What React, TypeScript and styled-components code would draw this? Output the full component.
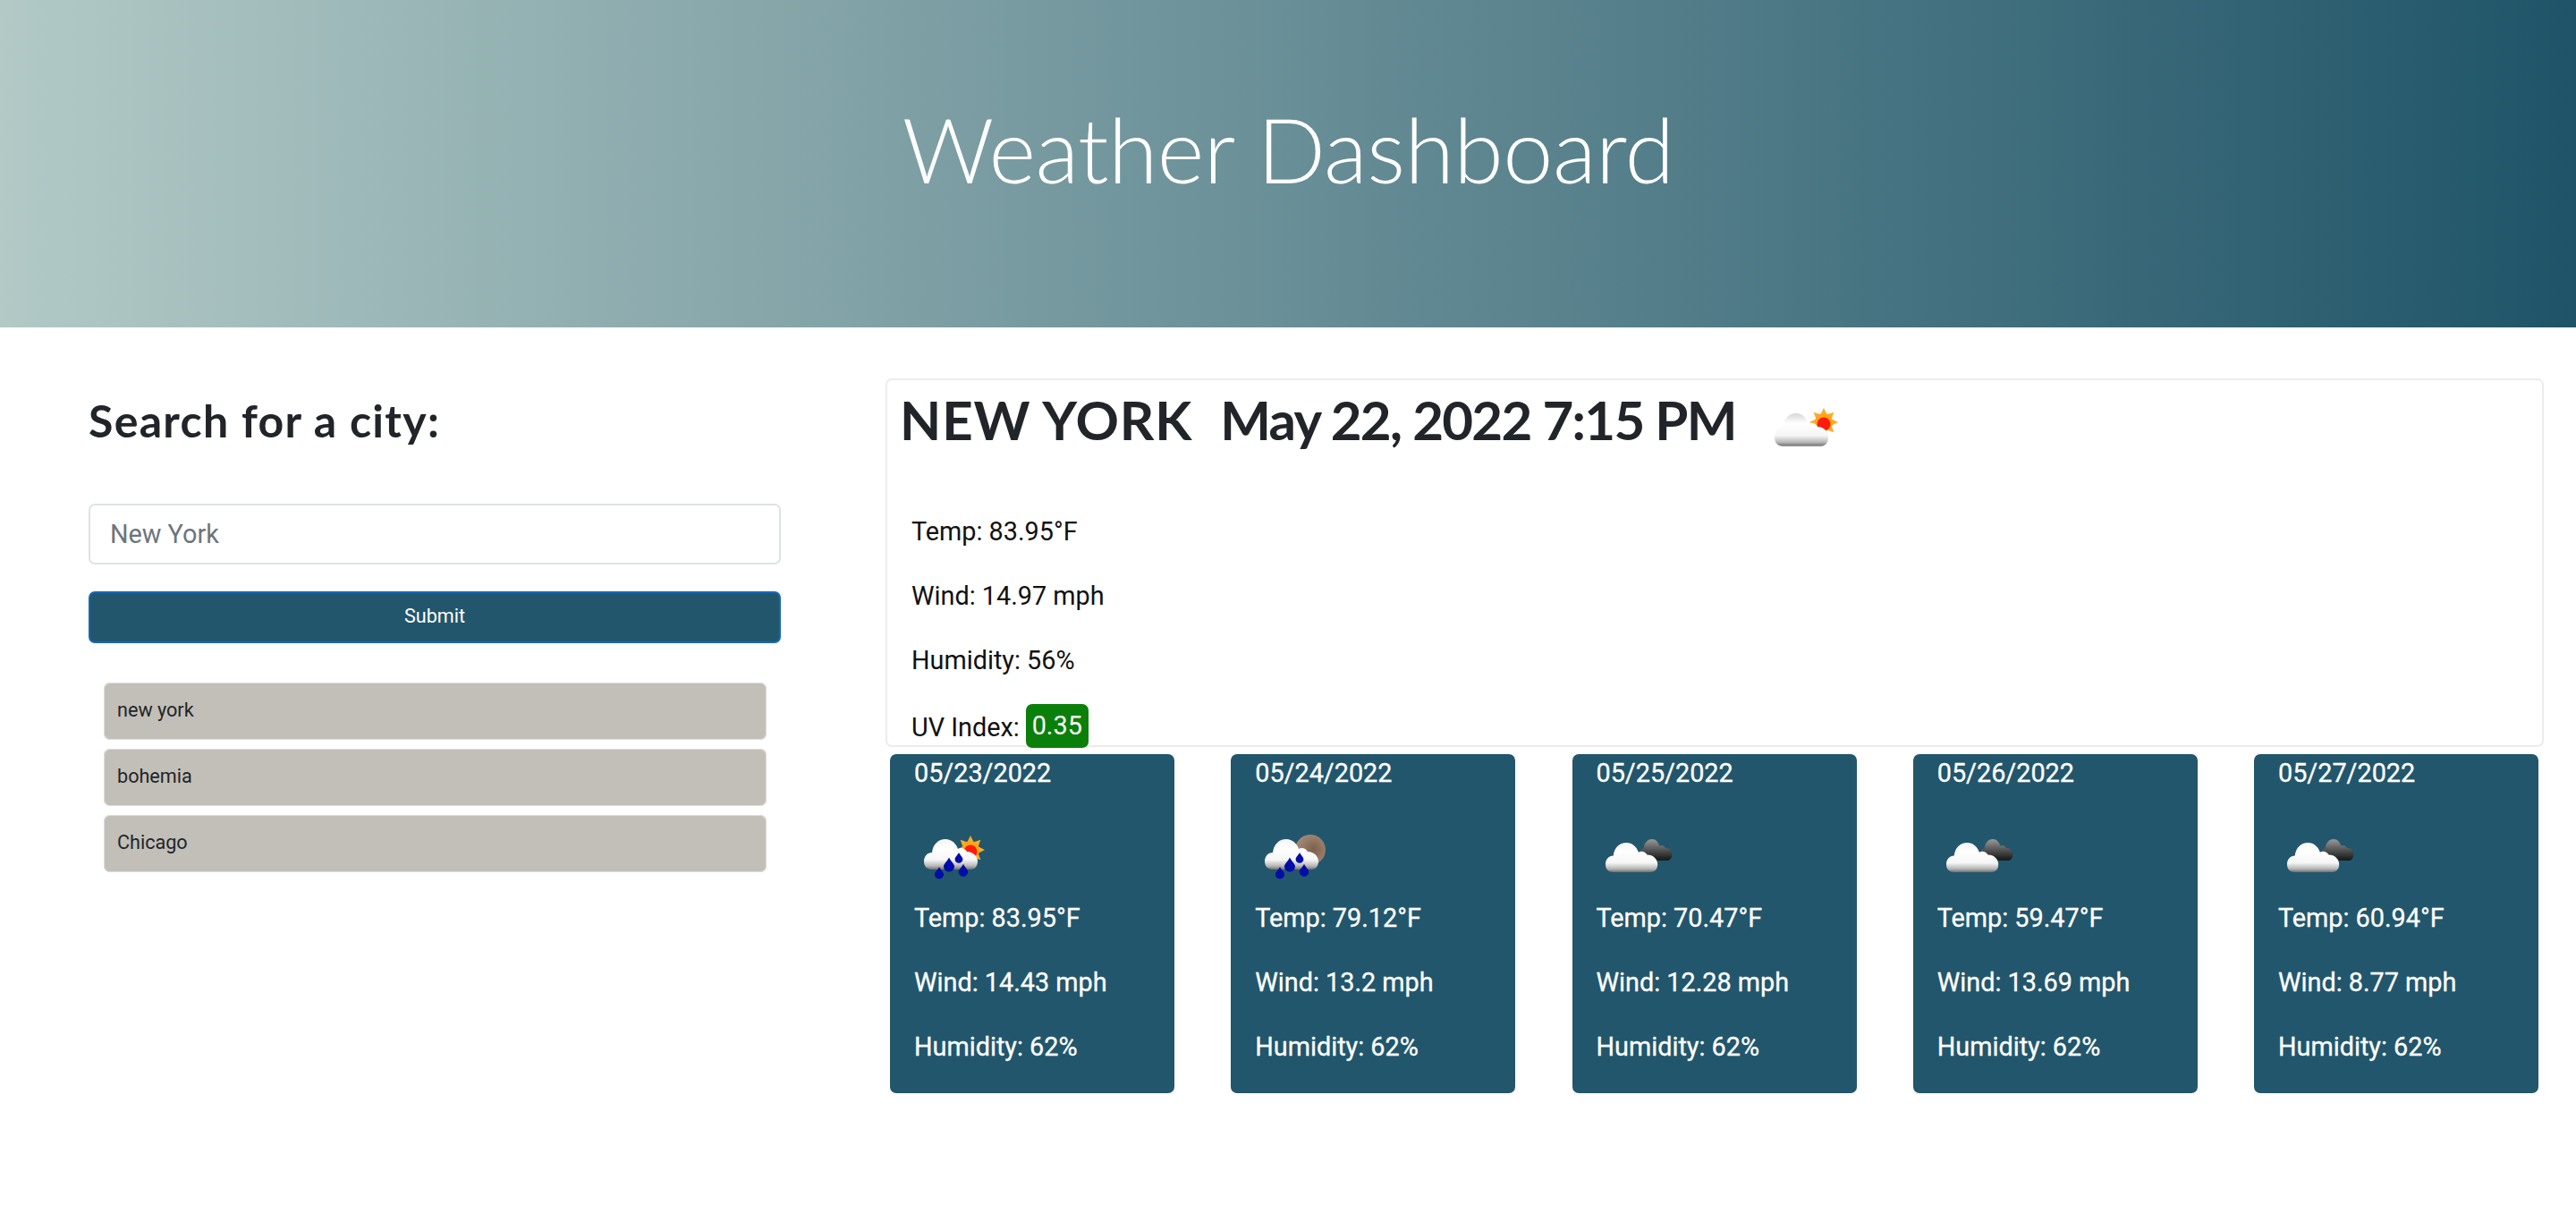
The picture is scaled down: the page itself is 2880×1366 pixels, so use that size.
import React, { useId } from "react";
import styled, { createGlobalStyle } from "styled-components";

const Global = createGlobalStyle`
  html, body { margin: 0; padding: 0; background: #fff; }
  * { box-sizing: border-box; }
  body { font-family: Roboto, "Liberation Sans", sans-serif; color: #212529; font-size: 28.8px; line-height: 1.5; }
`;

const Page = styled.div`
  width: 2880px;
  min-height: 1366px;
`;

const Banner = styled.header`
  height: 366px;
  display: flex;
  align-items: center;
  justify-content: center;
  background: linear-gradient(to right, #b2c9c6, #1f5468);
`;

const Title = styled.h1`
  margin: 0 0 34px 0;
  font-family: Lato, "Open Sans", sans-serif;
  font-weight: 300;
  font-size: 100.8px;
  line-height: 1.2;
  letter-spacing: -0.6px;
  color: #fff;
`;

const Main = styled.main`
  display: flex;
  align-items: flex-start;
  padding: 57px 36px 0 99px;
  gap: 117px;
`;

const Sidebar = styled.aside`
  width: 774px;
  flex: none;
  display: flex;
  flex-direction: column;
`;

const SearchTitle = styled.h2`
  margin: 17px 0 63px 0;
  font-family: Lato, "Open Sans", sans-serif;
  font-weight: 700;
  font-size: 50px;
  line-height: 60px;
  letter-spacing: 1.3px;
  color: #212529;
`;

const CityInput = styled.input`
  width: 100%;
  height: 68px;
  padding: 0 22px;
  border: 2px solid #dee2e6;
  border-radius: 7px;
  background: #fff;
  font: 400 28.8px Roboto, sans-serif;
  color: #212529;
  &::placeholder { color: #6c757d; opacity: 1; }
`;

const SubmitButton = styled.button`
  width: 100%;
  height: 58px;
  margin-top: 30px;
  padding: 0 0 3px 0;
  border: 2px solid #1668b8;
  border-radius: 7px;
  background: #22566c;
  color: #fff;
  font: 400 21.6px Roboto, sans-serif;
`;

const History = styled.ul`
  list-style: none;
  margin: 44px 0 0 0;
  padding: 0 16px 0 17px;
  display: flex;
  flex-direction: column;
  gap: 10px;
`;

const HistoryItem = styled.li`
  height: 64px;
  padding: 0 15px 1px 15px;
  display: flex;
  align-items: center;
  border-radius: 7px;
  background: #c2bfb8;
  box-shadow: 0 0 0 1px #dededc inset;
  font-size: 21.6px;
  color: #212529;
`;

const Content = styled.section`
  flex: 1;
  min-width: 0;
  display: flex;
  flex-direction: column;
  gap: 8px;
`;

const Current = styled.article`
  height: 412px;
  border: 2px solid #ececec;
  border-radius: 7px;
  padding: 12px 0 0 0;
`;

const CurrentHead = styled.div`
  display: flex;
  align-items: flex-start;
  height: 90px;
  padding-left: 14px;
  margin-bottom: 46px;
`;

const CurrentTitle = styled.h2`
  margin: 2px 0 0 0;
  display: flex;
  gap: 31px;
  font-family: Lato, "Open Sans", sans-serif;
  font-weight: 700;
  font-size: 60px;
  line-height: 60px;
  color: #212529;
`;

const TitlePart = styled.span<{ $spacing: number }>`
  letter-spacing: ${(p) => p.$spacing}px;
`;

const IconBox = styled.svg`
  width: 90px;
  height: 90px;
  flex: none;
  display: block;
`;

const HeadIcon = styled.div`
  margin-left: 32px;
`;

const CurrentStats = styled.div`
  padding-left: 27px;
`;

const Stat = styled.p`
  margin: 0 0 28.8px 0;
  font-size: 28.8px;
  line-height: 43.2px;
  color: #111;
`;

const UvStat = styled(Stat)`
  margin-top: -2px;
`;

const UvBadge = styled.span`
  display: inline-block;
  margin-left: 7px;
  padding: 3px 7px;
  border-radius: 7px;
  background: #0a800a;
  color: #fff;
  vertical-align: 2px;
`;

const Forecast = styled.div`
  display: flex;
  justify-content: space-between;
  padding: 0 6px 0 5px;
`;

const DayCard = styled.article`
  width: 318px;
  height: 379px;
  padding: 0 27px;
  border-radius: 7px;
  background: #22566c;
  color: #fff;
  -webkit-text-stroke: 0.3px #fff;
`;

const DayDate = styled.div`
  font-size: 28.8px;
  line-height: 43.2px;
  margin-bottom: 28.8px;
`;

const DayStat = styled.p`
  margin: 0 0 28.8px 0;
  font-size: 28.8px;
  line-height: 43.2px;
`;

type Kind = "sun" | "rainSun" | "rainMoon" | "dark";

const CLOUD =
  "M9 34C3 34 0 30 0 25C0 19 4 15 9 15C10 6 16 0 24 0C31 0 36 5 38 11C41 9 46 10 48 14C55 14 60 19 60 25C60 30 57 34 52 34Z";

const Rays = ({ cx, cy }: { cx: number; cy: number }) => (
  <g>
    {[0, 45, 90, 135, 180, 225, 270, 315].map((a) => (
      <polygon
        key={a}
        points={`${cx - 3.4},${cy - 9} ${cx + 3.4},${cy - 9} ${cx},${cy - 16}`}
        fill="#f9ac2e"
        transform={`rotate(${a} ${cx} ${cy})`}
      />
    ))}
    <circle cx={cx} cy={cy} r={10} fill="#ffa516" />
    <circle cx={cx} cy={cy + 2} r={7.5} fill="#fb1e0c" />
  </g>
);

const Drop = ({ x, y, s }: { x: number; y: number; s: number }) => (
  <path
    d={`M${x} ${y - s * 1.6}C${x + s * 0.4} ${y - s * 0.8} ${x + s} ${y - s * 0.4} ${x + s} ${y + s * 0.1}A${s} ${s} 0 1 1 ${x - s} ${y + s * 0.1}C${x - s} ${y - s * 0.4} ${x - s * 0.4} ${y - s * 0.8} ${x} ${y - s * 1.6}Z`}
    fill="#0208a8"
  />
);

const WeatherIcon = ({ kind, light }: { kind: Kind; light?: boolean }) => {
  const id = useId().replace(/[^a-zA-Z0-9]/g, "");
  const rain = kind === "rainSun" || kind === "rainMoon";
  return (
    <IconBox viewBox="0 0 90 90">
      <defs>
        <linearGradient id={`${id}c`} x1="0" y1="0" x2="0" y2="1">
          <stop offset="0" stopColor={light ? "#d6d6d6" : "#f4f4f4"} />
          <stop offset="0.3" stopColor="#ffffff" />
          <stop offset="0.68" stopColor="#f6f6f6" />
          <stop offset="0.88" stopColor="#b8b8b8" />
          <stop offset="1" stopColor="#707070" />
        </linearGradient>
        <linearGradient id={`${id}d`} x1="0" y1="0" x2="0" y2="1">
          <stop offset="0" stopColor="#9a9a9a" />
          <stop offset="0.5" stopColor="#555" />
          <stop offset="1" stopColor="#141414" />
        </linearGradient>
        <radialGradient id={`${id}m`} cx="0.6" cy="0.5" r="0.6">
          <stop offset="0" stopColor="#7d5f4b" />
          <stop offset="1" stopColor="#a58c78" />
        </radialGradient>
        <filter id={`${id}b`} x="-20%" y="-20%" width="140%" height="140%">
          <feGaussianBlur stdDeviation="0.7" />
        </filter>
      </defs>
      <g filter={`url(#${id}b)`}>
        {kind === "sun" && <Rays cx={66} cy={35} />}
        {kind === "rainSun" && <Rays cx={63} cy={35} />}
        {kind === "rainMoon" && <circle cx={62} cy={35} r={17} fill={`url(#${id}m)`} />}
        {kind === "dark" && (
          <path transform="translate(47 23) scale(0.62 0.7)" d={CLOUD} fill={`url(#${id}d)`} />
        )}
        <path
          transform={kind === "sun" ? "translate(11 25) scale(1 1.08)" : kind === "dark" ? "translate(10 27) scale(0.97 0.97)" : "translate(11 23)"}
          d={CLOUD}
          fill={`url(#${id}c)`}
        />
        {rain && (
          <>
            <Drop x={28} y={62} s={5} />
            <Drop x={39} y={53} s={6} />
            <Drop x={50} y={45} s={4.4} />
            <Drop x={55} y={59} s={5.2} />
          </>
        )}
      </g>
    </IconBox>
  );
};

const days: { date: string; kind: Kind; temp: string; wind: string; humidity: string }[] = [
  { date: "05/23/2022", kind: "rainSun", temp: "83.95", wind: "14.43", humidity: "62" },
  { date: "05/24/2022", kind: "rainMoon", temp: "79.12", wind: "13.2", humidity: "62" },
  { date: "05/25/2022", kind: "dark", temp: "70.47", wind: "12.28", humidity: "62" },
  { date: "05/26/2022", kind: "dark", temp: "59.47", wind: "13.69", humidity: "62" },
  { date: "05/27/2022", kind: "dark", temp: "60.94", wind: "8.77", humidity: "62" },
];

export default function App() {
  return (
    <Page>
      <Global />
      <Banner>
        <Title>Weather Dashboard</Title>
      </Banner>
      <Main>
        <Sidebar>
          <SearchTitle>Search for a city:</SearchTitle>
          <CityInput placeholder="New York" />
          <SubmitButton>Submit</SubmitButton>
          <History>
            <HistoryItem>new york</HistoryItem>
            <HistoryItem>bohemia</HistoryItem>
            <HistoryItem>Chicago</HistoryItem>
          </History>
        </Sidebar>
        <Content>
          <Current>
            <CurrentHead>
              <CurrentTitle>
                <TitlePart $spacing={0.9}>NEW YORK</TitlePart>
                <TitlePart $spacing={-1.7}>May 22, 2022 7:15 PM</TitlePart>
              </CurrentTitle>
              <HeadIcon>
                <WeatherIcon kind="sun" light />
              </HeadIcon>
            </CurrentHead>
            <CurrentStats>
              <Stat>Temp: 83.95°F</Stat>
              <Stat>Wind: 14.97 mph</Stat>
              <Stat>Humidity: 56%</Stat>
              <UvStat>
                UV Index:<UvBadge>0.35</UvBadge>
              </UvStat>
            </CurrentStats>
          </Current>
          <Forecast>
            {days.map((d) => (
              <DayCard key={d.date}>
                <DayDate>{d.date}</DayDate>
                <WeatherIcon kind={d.kind} />
                <DayStat>Temp: {d.temp}°F</DayStat>
                <DayStat>Wind: {d.wind} mph</DayStat>
                <DayStat>Humidity: {d.humidity}%</DayStat>
              </DayCard>
            ))}
          </Forecast>
        </Content>
      </Main>
    </Page>
  );
}
